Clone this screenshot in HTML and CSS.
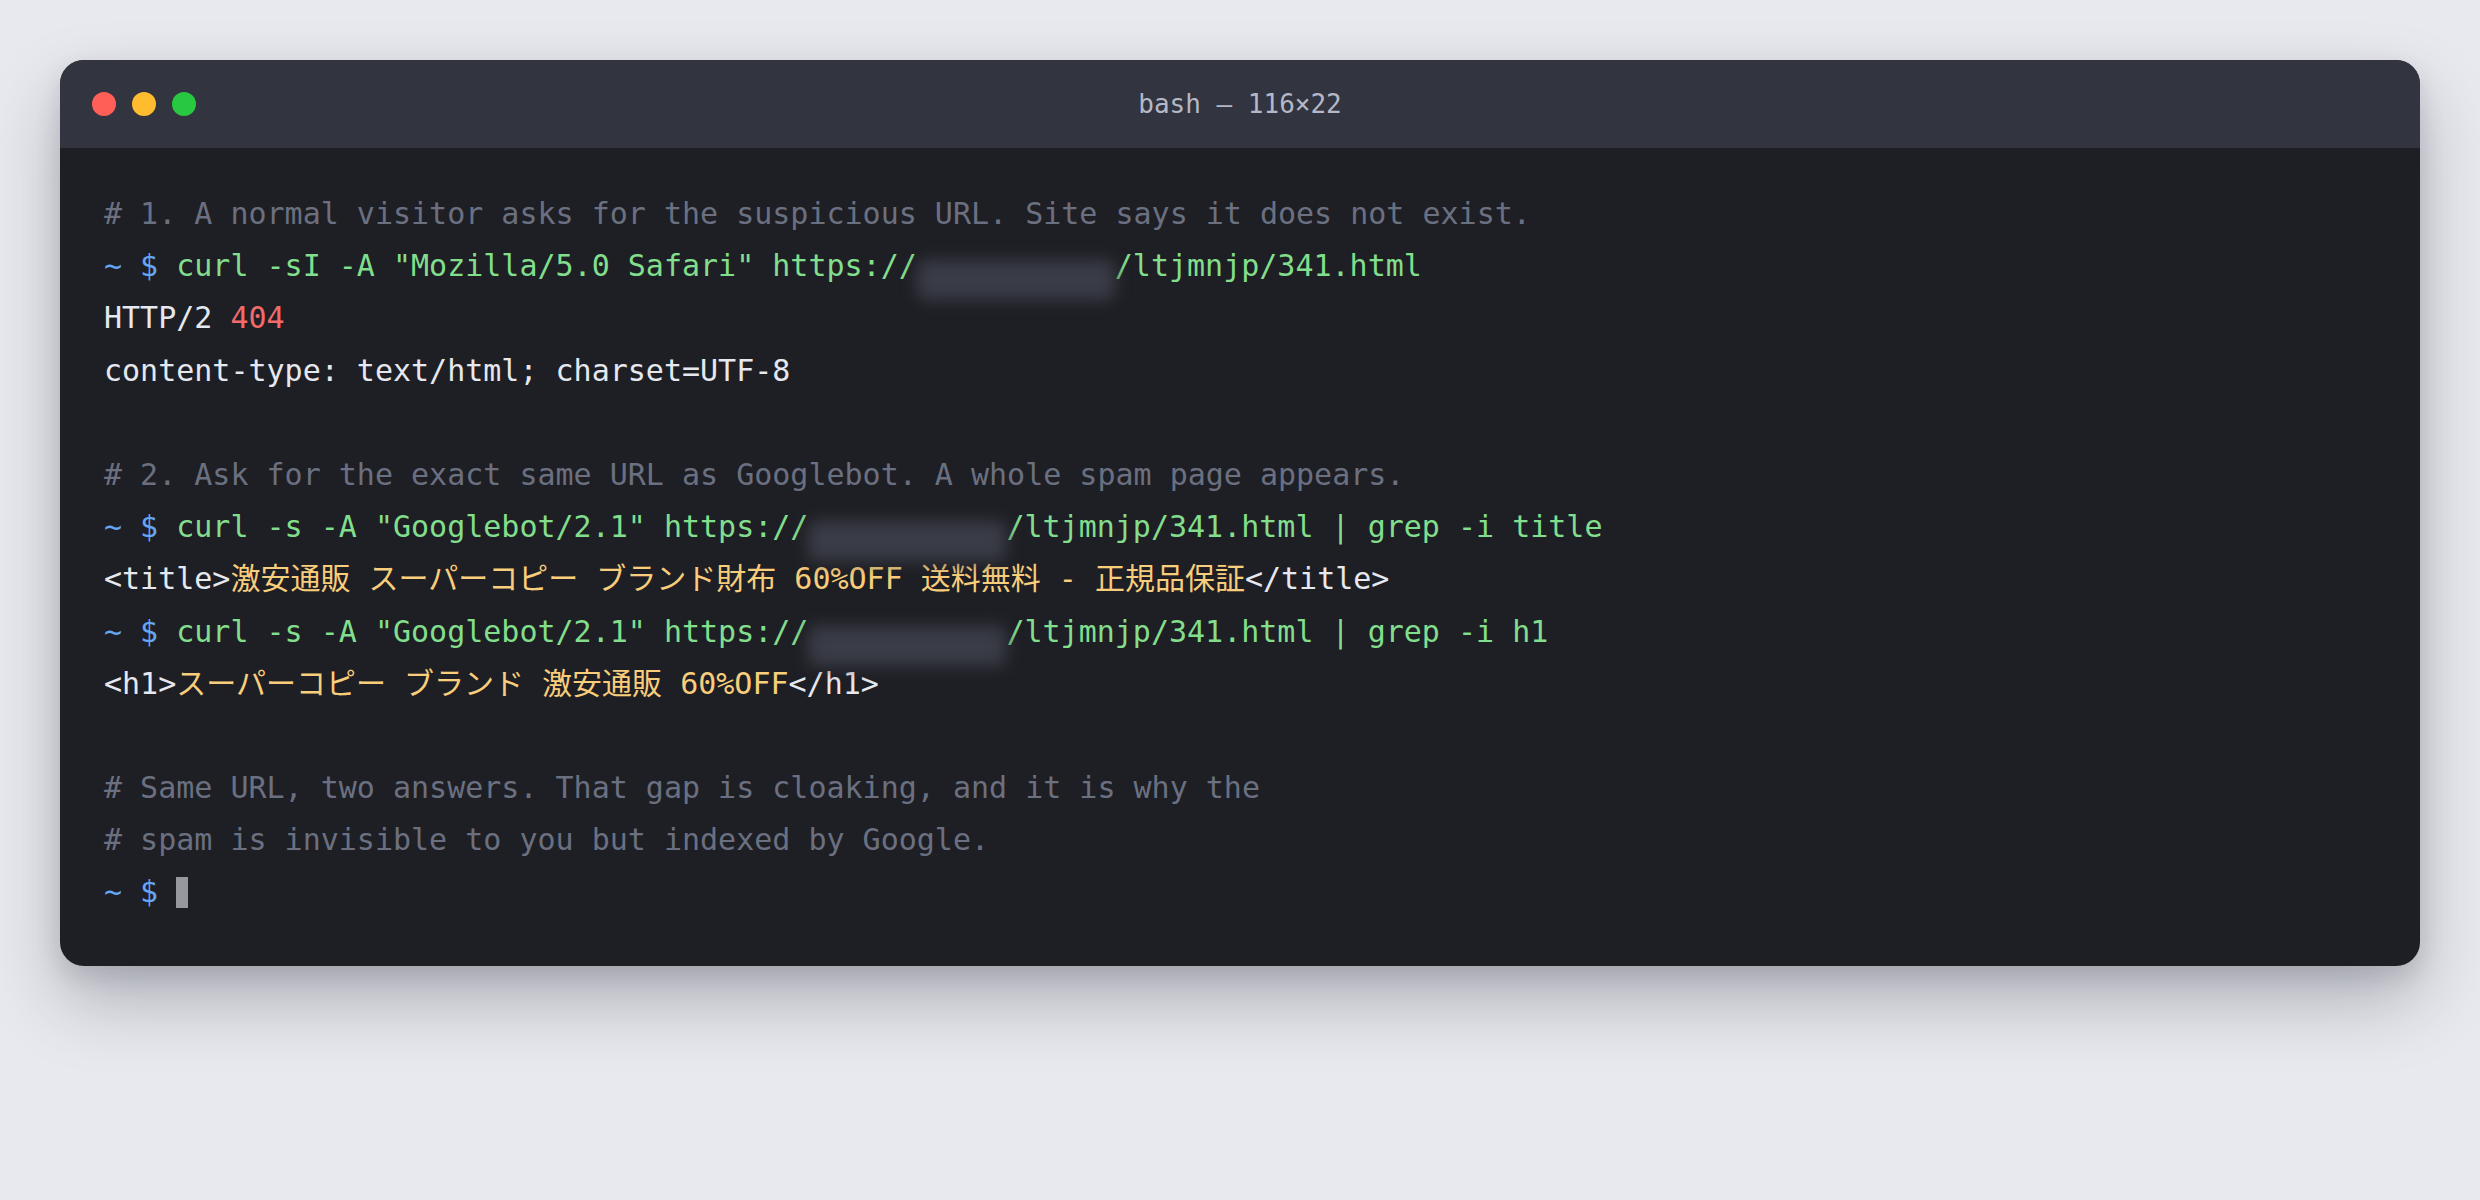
FILE: index.html
```html
<!DOCTYPE html>
<html lang="en">
<head>
<meta charset="utf-8">
<title>bash — 116×22</title>
<link rel="stylesheet" href="styles.css">
</head>
<body>
<div class="window">
  <div class="titlebar">
    <div class="lights">
      <span class="light red"></span>
      <span class="light yellow"></span>
      <span class="light green"></span>
    </div>
    <div class="title">bash — 116×22</div>
    <div class="spacer"></div>
  </div>
  <div class="term">
    <div class="line c-comment"># 1. A normal visitor asks for the suspicious URL. Site says it does not exist.</div>
    <div class="line"><span class="c-prompt">~ $ </span><span class="c-cmd">curl -sI -A "Mozilla/5.0 Safari" https://<span class="redact"></span>/ltjmnjp/341.html</span></div>
    <div class="line c-out">HTTP/2 <span class="c-err">404</span></div>
    <div class="line c-out">content-type: text/html; charset=UTF-8</div>
    <div class="line"></div>
    <div class="line c-comment"># 2. Ask for the exact same URL as Googlebot. A whole spam page appears.</div>
    <div class="line"><span class="c-prompt">~ $ </span><span class="c-cmd">curl -s -A "Googlebot/2.1" https://<span class="redact"></span>/ltjmnjp/341.html | grep -i title</span></div>
    <div class="line c-out">&lt;title&gt;<span class="c-hl">激安通販 スーパーコピー ブランド財布 60%OFF 送料無料 - 正規品保証</span>&lt;/title&gt;</div>
    <div class="line"><span class="c-prompt">~ $ </span><span class="c-cmd">curl -s -A "Googlebot/2.1" https://<span class="redact"></span>/ltjmnjp/341.html | grep -i h1</span></div>
    <div class="line c-out">&lt;h1&gt;<span class="c-hl">スーパーコピー ブランド 激安通販 60%OFF</span>&lt;/h1&gt;</div>
    <div class="line"></div>
    <div class="line c-comment"># Same URL, two answers. That gap is cloaking, and it is why the</div>
    <div class="line c-comment"># spam is invisible to you but indexed by Google.</div>
    <div class="line"><span class="c-prompt">~ $ </span><span class="cursor"></span></div>
  </div>
</div>
</body>
</html>
```

FILE: styles.css
```css
html {
  margin: 0;
  padding: 0;
  background: #e8e9ee;
  height: 100%;
}

body {
  margin: 0;
  box-sizing: border-box;
  min-height: 100%;
  background: #e8e9ee;
  padding: 60px;
  font-family: "DejaVu Sans Mono", "Noto Sans CJK JP", monospace;
}

.window {
  width: 2360px;
  height: 906px;
  border-radius: 24px;
  overflow: hidden;
  background: #1e1f24;
  box-shadow: 0 34px 70px rgba(30, 32, 50, 0.28), 0 10px 24px rgba(30, 32, 50, 0.12);
  display: flex;
  flex-direction: column;
}

.titlebar {
  height: 88px;
  flex: none;
  background: #32343f;
  display: grid;
  grid-template-columns: 1fr auto 1fr;
  align-items: center;
  padding: 0 32px;
}

.lights {
  display: flex;
  gap: 16px;
}

.light {
  width: 24px;
  height: 24px;
  border-radius: 50%;
  display: block;
}

.light.red { background: #ff5f57; }
.light.yellow { background: #febc2e; }
.light.green { background: #28c840; }

.title {
  font-family: "DejaVu Sans Mono", monospace;
  font-size: 26px;
  color: #b5b8c6;
  line-height: 1;
}

.term {
  padding: 40px 44px 47px 44px;
  display: grid;
  grid-auto-rows: 52.2px;
  font-size: 30px;
  line-height: 52.2px;
  color: #e6e8ef;
}

.line {
  white-space: pre;
  height: 52.2px;
}

.line span {
  line-height: 1;
}

.c-comment { color: #6b7081; }
.c-prompt { color: #64a6f4; }
.c-cmd { color: #82de8c; }
.c-out { color: #e6e8ef; }
.c-err { color: #f26a6a; }
.c-hl { color: #f8cd7b; }

.redact {
  display: inline-block;
  width: 198px;
  height: 40px;
  vertical-align: -24px;
  background: #3a3c47;
  filter: blur(8px);
  border-radius: 8px;
}

.cursor {
  display: inline-block;
  width: 12px;
  height: 31px;
  vertical-align: -6px;
  background: #97989f;
}
```
